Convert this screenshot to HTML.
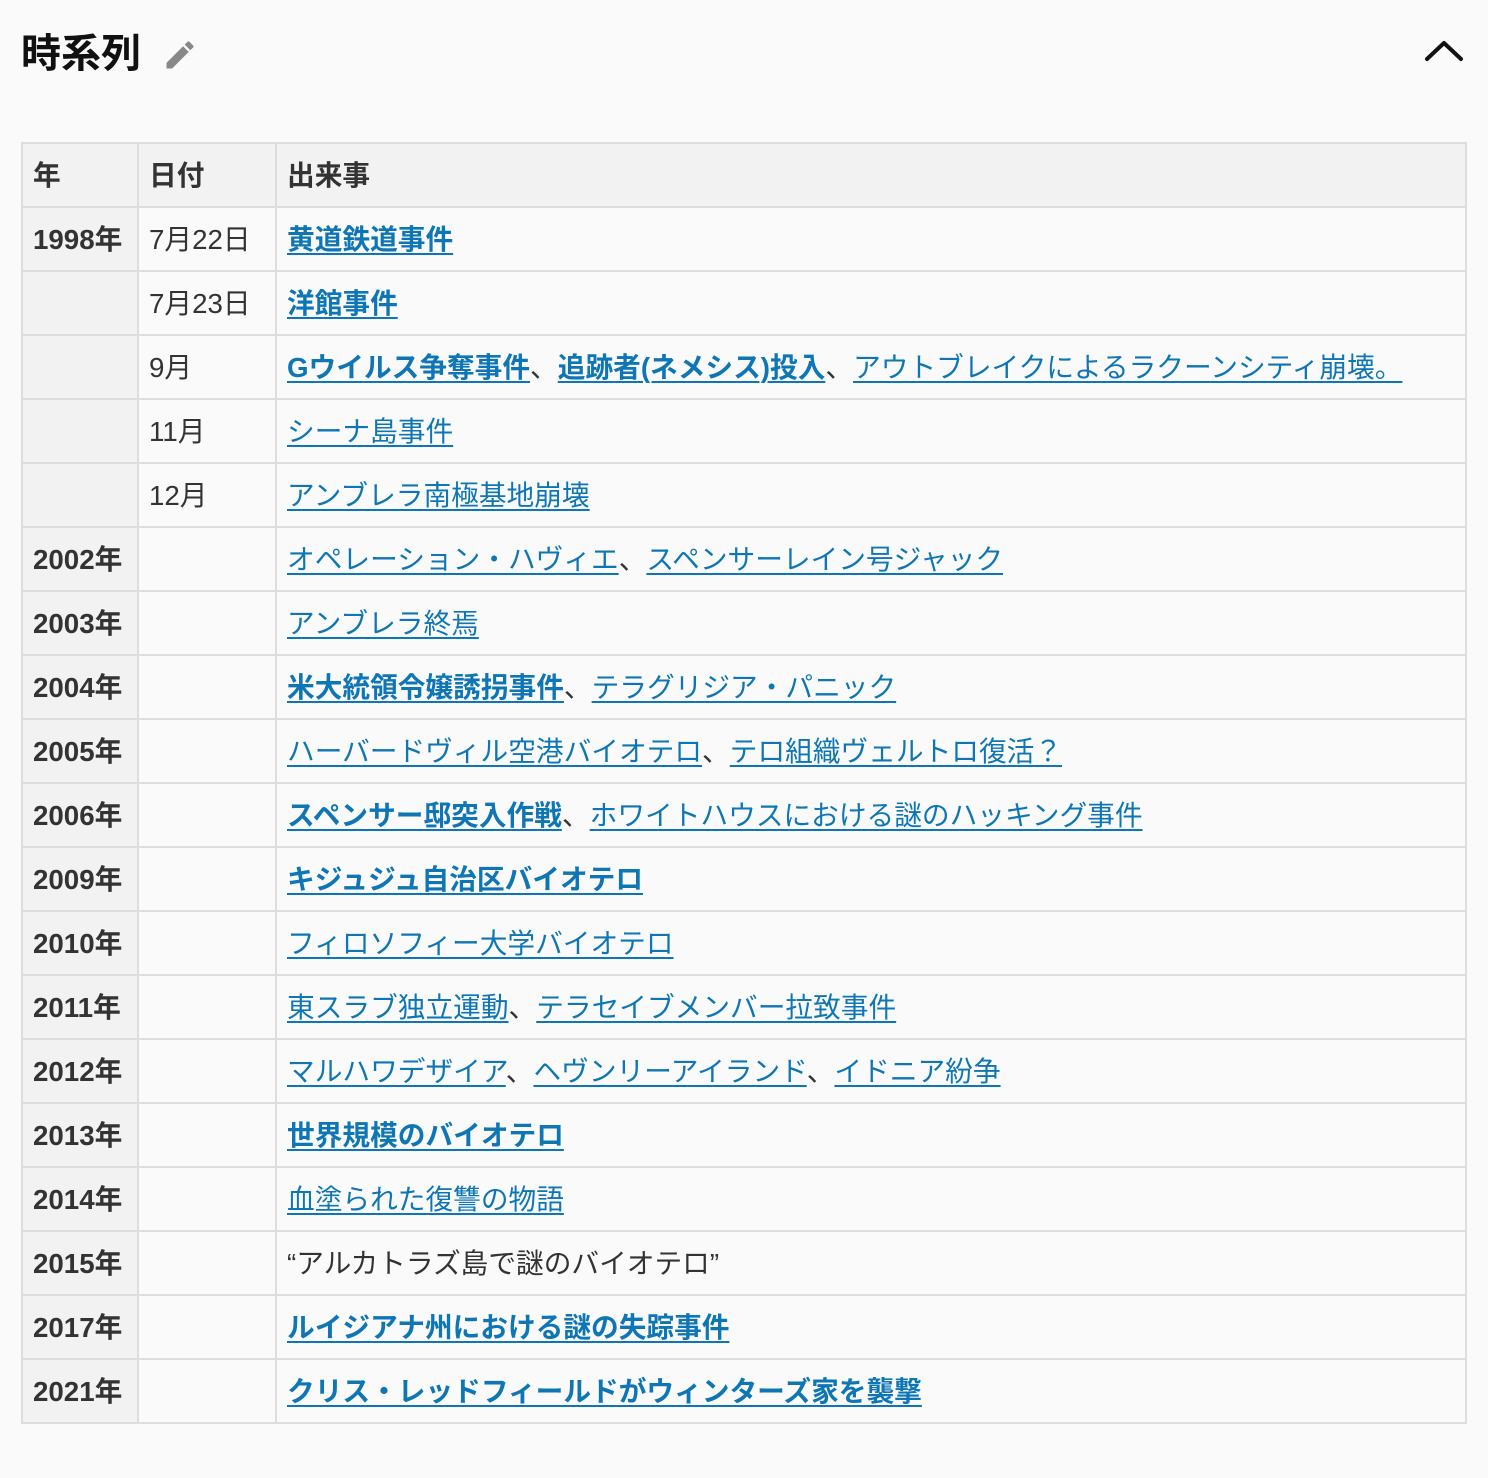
<!DOCTYPE html>
<html><head><meta charset="utf-8"><style>
body{margin:0;background:#fafafa;width:1488px;height:1478px;font-family:"Liberation Sans","Noto Sans CJK JP",sans-serif;color:#333;position:relative;}
h2{position:absolute;left:21px;top:28px;margin:0;font-size:40px;line-height:52px;font-weight:bold;color:#111;}
.pen{position:absolute;left:162px;top:37px;}
.chev{position:absolute;left:1424px;top:38px;}
table{position:absolute;left:21px;top:142px;border-collapse:collapse;width:1446px;table-layout:fixed;font-size:27.7px;}
td,th{border:2px solid #ddd;height:62px;padding:0 10px 5px 10px;text-align:left;white-space:nowrap;box-sizing:border-box;}
tr{height:64px;}
th{background:#f2f2f2;font-weight:bold;}
td:first-child{background:#f2f2f2;font-weight:bold;}
td{background:#fafafa;}
a{color:#0f76b6;text-decoration:underline;text-decoration-thickness:2px;text-underline-offset:4px;}
a.b{font-weight:bold;}
</style></head><body>
<h2>時系列</h2>
<svg class="pen" width="36" height="36" viewBox="0 0 24 24"><path d="M3 17.25V21h3.75L17.81 9.94l-3.75-3.75L3 17.25zM20.71 7.04a1 1 0 000-1.41l-2.34-2.34a1 1 0 00-1.41 0l-1.830 1.83 3.75 3.75 1.83-1.83z" fill="#888"/></svg>
<svg class="chev" width="40" height="26" viewBox="0 0 40 26"><path d="M3 21L20 5 37 21" fill="none" stroke="#111" stroke-width="4" stroke-linecap="round" stroke-linejoin="round"/></svg>
<table>
<colgroup><col style="width:116px"><col style="width:138px"><col></colgroup>
<tr><th>年</th><th>日付</th><th>出来事</th></tr>
<tr><td>1998年</td><td>7月22日</td><td><a class="b">黄道鉄道事件</a></td></tr>
<tr><td></td><td>7月23日</td><td><a class="b">洋館事件</a></td></tr>
<tr><td></td><td>9月</td><td><a class="b">Gウイルス争奪事件</a>、<a class="b">追跡者(ネメシス)投入</a>、<a>アウトブレイクによるラクーンシティ崩壊。</a></td></tr>
<tr><td></td><td>11月</td><td><a>シーナ島事件</a></td></tr>
<tr><td></td><td>12月</td><td><a>アンブレラ南極基地崩壊</a></td></tr>
<tr><td>2002年</td><td></td><td><a>オペレーション・ハヴィエ</a>、<a>スペンサーレイン号ジャック</a></td></tr>
<tr><td>2003年</td><td></td><td><a>アンブレラ終焉</a></td></tr>
<tr><td>2004年</td><td></td><td><a class="b">米大統領令嬢誘拐事件</a>、<a>テラグリジア・パニック</a></td></tr>
<tr><td>2005年</td><td></td><td><a>ハーバードヴィル空港バイオテロ</a>、<a>テロ組織ヴェルトロ復活？</a></td></tr>
<tr><td>2006年</td><td></td><td><a class="b">スペンサー邸突入作戦</a>、<a>ホワイトハウスにおける謎のハッキング事件</a></td></tr>
<tr><td>2009年</td><td></td><td><a class="b">キジュジュ自治区バイオテロ</a></td></tr>
<tr><td>2010年</td><td></td><td><a>フィロソフィー大学バイオテロ</a></td></tr>
<tr><td>2011年</td><td></td><td><a>東スラブ独立運動</a>、<a>テラセイブメンバー拉致事件</a></td></tr>
<tr><td>2012年</td><td></td><td><a>マルハワデザイア</a>、<a>ヘヴンリーアイランド</a>、<a>イドニア紛争</a></td></tr>
<tr><td>2013年</td><td></td><td><a class="b">世界規模のバイオテロ</a></td></tr>
<tr><td>2014年</td><td></td><td><a>血塗られた復讐の物語</a></td></tr>
<tr><td>2015年</td><td></td><td>“アルカトラズ島で謎のバイオテロ”</td></tr>
<tr><td>2017年</td><td></td><td><a class="b">ルイジアナ州における謎の失踪事件</a></td></tr>
<tr><td>2021年</td><td></td><td><a class="b">クリス・レッドフィールドがウィンターズ家を襲撃</a></td></tr>
</table>
</body></html>
